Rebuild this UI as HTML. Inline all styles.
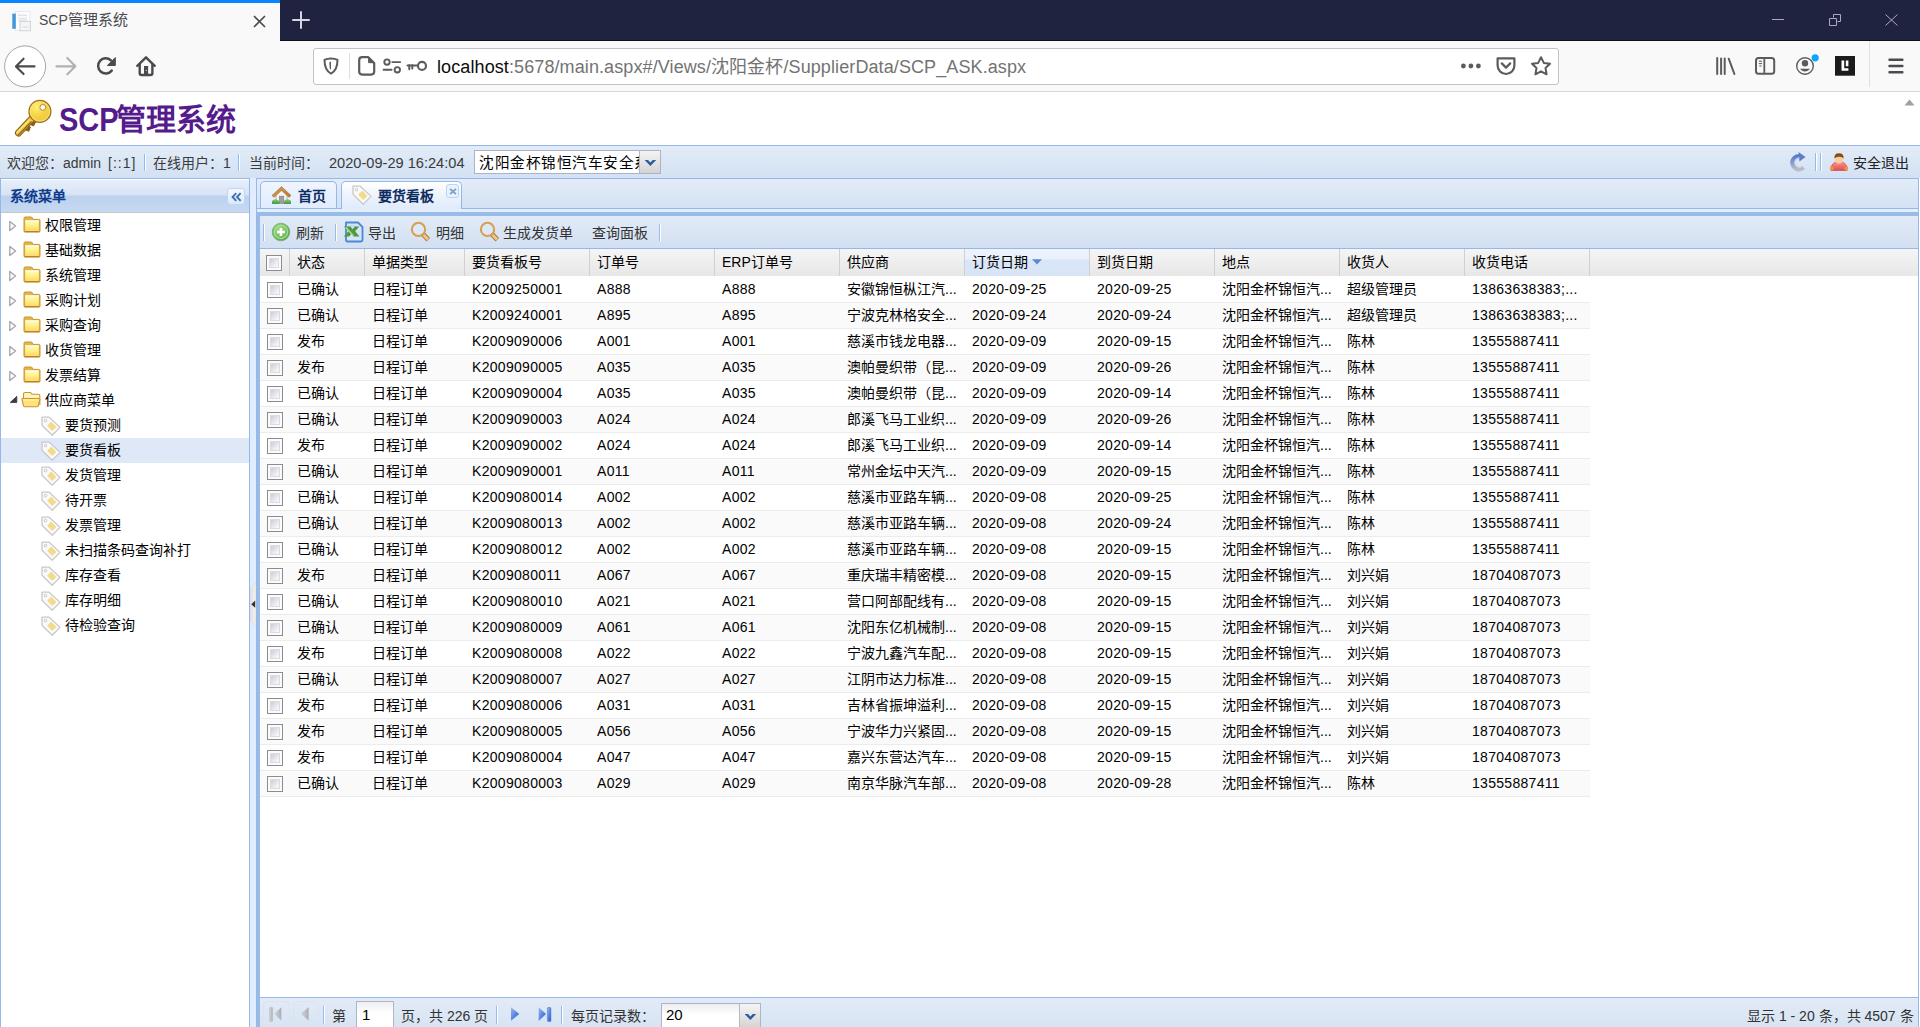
<!DOCTYPE html>
<html lang="zh-CN"><head><meta charset="utf-8">
<style>
*{margin:0;padding:0;box-sizing:border-box}
html,body{width:1920px;height:1027px;overflow:hidden;background:#fff;font-family:"Liberation Sans",sans-serif;}
.abs{position:absolute}
i{display:block;position:absolute;font-style:normal}
/* ---------- firefox chrome ---------- */
#tabbar{position:absolute;left:0;top:0;width:1920px;height:41px;background:#202340;}
#tabbar .edge{position:absolute;left:280px;top:40px;width:1640px;height:1px;background:#0c0c1d}
#acttab{position:absolute;left:0;top:0;width:280px;height:41px;background:#f9f9fa}
#acttab .line{position:absolute;left:0;top:0;width:280px;height:3px;background:#0a84ff}
#acttab .title{position:absolute;left:39px;top:9px;font-size:15px;color:#4a4a4f;white-space:nowrap;line-height:22px}
#navbar{position:absolute;left:0;top:41px;width:1920px;height:50px;background:#f9f9fa}
#navbar .bb{position:absolute;left:0;top:50px;width:1920px;height:1px;background:#d7d7db}
#urlbox{position:absolute;left:313px;top:48px;width:1246px;height:37px;background:#fff;border:1px solid #c2c2c4;border-radius:3px}
#urltext{position:absolute;left:437px;top:56px;letter-spacing:0.1px;font-size:18px;line-height:22px;color:#0c0c0d;white-space:nowrap}
#urltext span{color:#737373}
svg{position:absolute;overflow:visible}
/* ---------- page ---------- */
#logo{position:absolute;left:59px;top:100px;font-size:30px;font-weight:900;color:#551a8b;line-height:40px;white-space:nowrap}
#userbar{position:absolute;left:0;top:145px;width:1920px;height:33px;border-top:1px solid #95b8e7;background:linear-gradient(#e3ecf8,#d3e1f3)}
.ub{position:absolute;top:8px;font-size:14px;color:#3a3a3a;line-height:18px;white-space:nowrap}
.ub.lat{font-size:14px}
.usep{position:absolute;top:8px;width:2px;height:17px;border-left:1px solid #8fbaf5;border-right:1px solid #fff}
#combo{position:absolute;left:474px;top:150px;width:187px;height:24px;border:1px solid #aab3c8;background:#fff}
#combo .t{position:absolute;left:4px;top:2px;font-size:14.6px;letter-spacing:0.5px;color:#000;line-height:20px;white-space:nowrap;width:175px;overflow:hidden}
#combo .arr{position:absolute;right:0;top:0;width:21px;height:22px;background:linear-gradient(#f4f4f4,#e6e6e6 45%,#d3d3d3);border-left:1px solid #b4b9c8}
/* west */
#west{position:absolute;left:0;top:178px;width:250px;height:849px;border:1px solid #95b8e7;border-bottom:none;background:#fff}
#westhead{position:absolute;left:0;top:0;width:248px;height:34px;background:linear-gradient(#e6eefa 0,#d7e3f4 15px,#bcd1ee 16px,#c6daf3 33px);border-top:1px solid #fff;border-bottom:1px solid #c6c6c6}
#westhead .t{position:absolute;left:9px;top:7px;font-size:14px;font-weight:bold;color:#0e3b8c;line-height:18px}
#collapse{position:absolute;left:226px;top:8px;width:18px;height:17px;border:1px solid #c0d6f5;border-radius:3px;background:linear-gradient(#f4f8fe,#dbe8fb)}
#splitter{position:absolute;left:250px;top:178px;width:6px;height:849px;background:#e0ecff}
.tn{position:absolute;left:0;width:248px;height:25px}
.tn.sel{background:#dfe8f6}
.tt{position:absolute;top:3px;font-size:14px;color:#000;line-height:18px;white-space:nowrap}
/* center */
#center{position:absolute;left:256px;top:178px;width:1663px;height:849px;border:1px solid #95b8e7;border-bottom:none;background:#e0ecff}
#tabstrip{position:absolute;left:0;top:0;width:1661px;height:33px;background:linear-gradient(#e3ecf8 0,#d4e1f3 29px,#e4edfb 30px,#e4edfb 33px)}
#tabstrip .bl{position:absolute;left:0;top:29px;width:1661px;height:1px;background:#95b8e7}
.etab{position:absolute;top:2px;height:27px;border:1px solid #95b8e7;border-bottom:none;border-radius:5px 5px 0 0}
#tab1{left:3px;width:77px;background:linear-gradient(#eff5ff,#e0ecff)}
#tab2{left:84px;width:121px;height:28px;background:linear-gradient(#ffffff 0,#f4f8fe 30%,#dfeafb 100%)}
.etab .t{position:absolute;top:5px;font-size:14px;font-weight:bold;color:#0e2d5f;line-height:18px;white-space:nowrap}
#bluebar{position:absolute;left:0;top:33px;width:1661px;height:4px;background:#99bbe8}
#bluel{position:absolute;left:0;top:33px;width:3px;height:816px;background:#99bbe8}
#tbpanel{position:absolute;left:3px;top:37px;width:1658px;height:812px;background:#fff}
#toolbar{position:absolute;left:0;top:0;width:1658px;height:33px;background:linear-gradient(#e1eaf7,#d3e0f2);border-bottom:1px solid #95b8e7}
.tsep{position:absolute;top:8px;width:2px;height:17px;border-left:1px solid #99bbe8;border-right:1px solid #fff}
.tbt{position:absolute;top:8px;font-size:14px;color:#333;line-height:18px;white-space:nowrap}
/* grid */
#ghead{position:absolute;left:0;top:33px;width:1658px;height:27px;background:linear-gradient(#f5f5f5,#e7e7e7)}
.hsort{position:absolute;top:0;height:27px;background:linear-gradient(#edf3fc 0,#e9f1fc 10px,#d9e6f8 11px,#d8e5f7 27px)}
.hc{position:absolute;top:4px;font-size:14px;color:#000;line-height:18px;white-space:nowrap}
.hdiv{position:absolute;top:0;width:1px;height:27px;background:#d0d0d0}
.row{position:absolute;left:0;width:1330px;height:26px;background:#fff;border-bottom:1px solid #ececec}
.row.alt{background:#fafafa}
.c{position:absolute;top:3px;font-size:14px;color:#000;line-height:18px;white-space:nowrap}
.c.l{letter-spacing:0.3px}
.cb{width:16px;height:16px;border:1px solid #8c8c8c;background:#fbfbfb}
.cb::after{content:"";box-sizing:border-box;position:absolute;left:2px;top:2px;width:10px;height:10px;border:1px solid #d9dce2;background:linear-gradient(135deg,#c9ced6,#eef0f3 70%,#f7f8f9)}
#pager{position:absolute;left:0;top:781px;width:1658px;height:30px;border-top:1px solid #95b8e7;background:linear-gradient(#e2ebf7,#d8e4f3)}
.pt{position:absolute;top:9px;font-size:14px;color:#333;line-height:18px;white-space:nowrap}
.pbtn{position:absolute;top:3px;height:30px;border:1px solid #dde3ec;border-radius:4px}
.pinp{position:absolute;top:3px;height:30px;border:1px solid #b0b4c6;background:linear-gradient(#eceeef,#fff 40%)}
</style></head><body>
<!-- Firefox tab bar -->
<div id="tabbar"><div class="edge"></div>
  <div id="acttab"><div class="line"></div>
    <div class="title"><span style="font-size:14px">SCP</span>管理系统</div>
  </div>
</div>
<div id="navbar"><div class="bb"></div></div>
<div id="urlbox"></div>
<div id="urltext">localhost<span>:5678/main.aspx#/Views/沈阳金杯/SupplierData/SCP_ASK.aspx</span></div>
<svg style="left:0;top:0" width="1920" height="92" viewBox="0 0 1920 92">
 <g id="favicon">
  <rect x="15.5" y="11.5" width="14.5" height="19" fill="#fbfcfd" stroke="#e3e6ea" stroke-width="0.8"/>
  <rect x="12.3" y="13.6" width="3.5" height="15.2" fill="#4398da"/>
  <rect x="18" y="14.5" width="9" height="1.6" fill="#e2e6ec"/>
  <rect x="18.5" y="17.5" width="8.5" height="3.8" fill="#e6eaf0"/>
  <rect x="20" y="21.5" width="10.5" height="9.3" fill="#f4f5f7" stroke="#c9ccd1" stroke-width="0.8"/>
  <rect x="22.5" y="26" width="6" height="2" fill="#e4e7ec"/>
 </g>
 <path d="M254 16L265 27M265 16L254 27" stroke="#4a4a4f" stroke-width="1.7"/>
 <path d="M301 12V28M293 20H309" stroke="#d6d6de" stroke-width="2" stroke-linecap="round"/>
 <path d="M1772 19.5H1784" stroke="#a9a9b8" stroke-width="1"/>
 <path d="M1833.5 17.5V14.5H1840.5V21.5H1837.5M1829.5 18.5H1836.5V25.5H1829.5Z" fill="none" stroke="#a9a9b8" stroke-width="1"/>
 <path d="M1885.5 14.5L1897.5 25.5M1897.5 14.5L1885.5 25.5" stroke="#a9a9b8" stroke-width="1"/>
 <circle cx="25.1" cy="66.4" r="20.5" fill="#fff" stroke="#a5a5a7" stroke-width="1"/>
 <path d="M34.5 66.4H16.5M23.6 58.7L15.9 66.4L23.6 74.1" fill="none" stroke="#4a4a4f" stroke-width="2.1" stroke-linecap="round" stroke-linejoin="round"/>
 <path d="M56.5 66.4H74.5M67.3 57.9L75.4 66.2L67.3 74.3" fill="none" stroke="#b1b1b3" stroke-width="2.1" stroke-linecap="round" stroke-linejoin="round"/>
 <path d="M111.7 70.6A7.6 7.6 0 1 1 110.9 60.3" fill="none" stroke="#4a4a4f" stroke-width="2.5" stroke-linecap="round"/>
 <path d="M115.3 57.6V65.5H107.4Z" fill="#4a4a4f" stroke="#4a4a4f" stroke-width="1" stroke-linejoin="round"/>
 <path d="M137.3 65.8L146 57.3L154.7 65.8" fill="none" stroke="#4a4a4f" stroke-width="2.4" stroke-linecap="round" stroke-linejoin="round"/>
 <path d="M139.7 63.5V73A2 2 0 0 0 141.7 75H150.4A2 2 0 0 0 152.4 73V63.5" fill="none" stroke="#4a4a4f" stroke-width="2.4"/>
 <rect x="144" y="66" width="4.1" height="9" fill="#4a4a4f"/>
 <circle cx="146.3" cy="70.5" r="0.6" fill="#fff"/>
 <path d="M331 58.5C328 58.5 325.6 59.3 324.5 59.9C324.5 66.2 325.6 70.6 331 73.6C336.4 70.6 337.5 66.2 337.5 59.9C336.4 59.3 334 58.5 331 58.5Z" fill="none" stroke="#5b5b5f" stroke-width="2" stroke-linejoin="round"/>
 <path d="M329.3 62.2L331 61.6V69.6L329.8 69Z" fill="#5b5b5f"/>
 <rect x="349" y="53" width="1" height="26" fill="#dedee0"/>
 <path d="M362.2 57.2H368.3L374.2 63.1V71.6A3 3 0 0 1 371.2 74.6H362.2A3 3 0 0 1 359.2 71.6V60.2A3 3 0 0 1 362.2 57.2Z" fill="none" stroke="#5b5b5f" stroke-width="2.2" stroke-linejoin="round"/>
 <path d="M368.6 58V62.7H373.5" fill="#5b5b5f" stroke="#5b5b5f" stroke-width="1"/>
 <circle cx="387" cy="62.1" r="2.7" fill="none" stroke="#5b5b5f" stroke-width="1.9"/>
 <circle cx="397.3" cy="69.8" r="2.7" fill="none" stroke="#5b5b5f" stroke-width="1.9"/>
 <path d="M392.3 62.1H400.2M383.6 69.8H391.6" stroke="#5b5b5f" stroke-width="1.9" stroke-linecap="round"/>
 <circle cx="422" cy="65.9" r="4" fill="none" stroke="#5b5b5f" stroke-width="2.1"/>
 <path d="M407.5 65.6H418M409.3 65V69.2M412.3 65V68.5" stroke="#5b5b5f" stroke-width="2" stroke-linecap="round"/>
 <circle cx="1463.4" cy="66" r="2.4" fill="#5b5b5f"/><circle cx="1470.9" cy="66" r="2.4" fill="#5b5b5f"/><circle cx="1478.4" cy="66" r="2.4" fill="#5b5b5f"/>
 <path d="M1497.6 58.4H1514.4V65.6A8.4 8.4 0 0 1 1497.6 65.6Z" fill="none" stroke="#5b5b5f" stroke-width="2.2" stroke-linejoin="round"/>
 <path d="M1501.8 63.4L1506 67.6L1510.2 63.4" fill="none" stroke="#5b5b5f" stroke-width="2.2" stroke-linecap="round" stroke-linejoin="round"/>
 <path d="M1541 57.2L1543.8 62.9L1550 63.7L1545.5 68L1546.6 74.3L1541 71.3L1535.4 74.3L1536.5 68L1532 63.7L1538.2 62.9Z" fill="none" stroke="#5b5b5f" stroke-width="2" stroke-linejoin="round"/>
 <path d="M1717.2 58V74M1721.1 58.5V74M1724.7 58.5V74M1728.7 58.7L1734.4 74" stroke="#5b5b5f" stroke-width="2" stroke-linecap="round"/>
 <rect x="1756" y="58" width="18.2" height="15.8" rx="2.6" fill="none" stroke="#5b5b5f" stroke-width="2"/>
 <path d="M1764.3 58V74" stroke="#5b5b5f" stroke-width="1.8"/>
 <path d="M1758.8 61.2H1762M1758.8 63.6H1762M1759.3 66H1761.5" stroke="#5b5b5f" stroke-width="1"/>
 <circle cx="1805" cy="66" r="8.3" fill="none" stroke="#5b5b5f" stroke-width="1.4"/>
 <circle cx="1805" cy="63.2" r="3.2" fill="#5b5b5f"/>
 <path d="M1800 68.8H1810A6 6 0 0 1 1800 68.8Z" fill="#5b5b5f"/>
 <circle cx="1815.2" cy="57.8" r="3.6" fill="#0aa5ff"/>
 <rect x="1835" y="56" width="20" height="19.7" fill="#1b1b1b"/>
 <path d="M1841.5 60.5H1844.2V68.3H1848.4V70.8H1841.5ZM1845.8 60.5H1848.4V66.2H1845.8Z" fill="#fff"/>
 <rect x="1869" y="41" width="1" height="46" fill="#e0e0e2"/>
 <path d="M1889.5 59.7H1902.4M1889.5 66H1902.4M1889.5 72.2H1902.4" stroke="#4a4a4f" stroke-width="2.4" stroke-linecap="round"/>
</svg>
<!-- page header -->
<svg style="left:12px;top:96px" width="44" height="44" viewBox="0 0 44 44">
  <defs><radialGradient id="kg" cx="0.35" cy="0.3" r="0.8"><stop offset="0" stop-color="#fff07a"/><stop offset="0.55" stop-color="#f4d23c"/><stop offset="1" stop-color="#e9c85a"/></radialGradient>
  <linearGradient id="ks" x1="0" y1="0" x2="1" y2="0"><stop offset="0" stop-color="#fbe679"/><stop offset="1" stop-color="#d9a826"/></linearGradient></defs>
  <path d="M21 21.5L6.5 37" stroke="#8d5c1c" stroke-width="7" stroke-linecap="round"/>
  <path d="M23.5 25L20.5 28.3L22.2 29.2M18 30.5L15.5 33.5L17.5 34.3" stroke="#8d5c1c" stroke-width="3"/>
  <path d="M21 21.5L6.5 37" stroke="#f1cf45" stroke-width="5" stroke-linecap="round"/>
  <path d="M19.5 25.5L5.8 39.5" stroke="#8d5c1c" stroke-width="1.2"/>
  <path d="M17 24.5L4.5 37" stroke="#fff3a8" stroke-width="1"/>
  <circle cx="27.9" cy="15.4" r="11" fill="url(#kg)" stroke="#a6741f" stroke-width="1.2"/>
  <circle cx="27.9" cy="15.4" r="9.6" fill="none" stroke="#fbeb9a" stroke-width="0.8" opacity="0.7"/>
  <circle cx="30.8" cy="11.4" r="2.9" fill="#fff" stroke="#b08a2a" stroke-width="1"/>
</svg>
<div id="logo"><span style="display:inline-block;font-size:33px;transform:scaleX(0.88);transform-origin:0 0;width:57px;vertical-align:-1px">SCP</span>管理系统</div>
<svg style="left:1904px;top:99px" width="11" height="7" viewBox="0 0 11 7"><path d="M5.5 .5L10.5 6.5H.5z" fill="#a0a0a0"/></svg>

<div id="userbar">
  <div class="ub" style="left:7px">欢迎您：</div>
  <div class="ub lat" style="left:63px">admin</div>
  <div class="ub lat" style="left:108px;letter-spacing:1px">[::1]</div>
  <div class="usep" style="left:144px"></div>
  <div class="ub" style="left:153px">在线用户：</div>
  <div class="ub lat" style="left:223px">1</div>
  <div class="usep" style="left:238px"></div>
  <div class="ub" style="left:249px">当前时间：</div>
  <div class="ub lat" style="left:329px;font-size:14.6px">2020-09-29 16:24:04</div>
  <div class="ub" style="left:1853px;color:#222">安全退出</div>
  <div class="usep" style="left:1815px;top:7px;height:18px"></div>
  <div class="usep" style="left:1820px;top:7px;height:18px"></div>
</div>
<svg style="left:1790px;top:151px" width="17" height="20" viewBox="0 0 17 20">
  <defs><linearGradient id="rf" x1="0" y1="0" x2="0" y2="1"><stop offset="0" stop-color="#5a7cc8"/><stop offset="0.6" stop-color="#8fa3d0"/><stop offset="1" stop-color="#b9bcc4"/></linearGradient></defs>
  <path d="M13.5 16.5A6.6 6.6 0 1 1 10 5.2" fill="none" stroke="url(#rf)" stroke-width="4.2"/>
  <path d="M8.5 1L15.5 6L9.5 10.5Z" fill="#5d7ec6"/>
  <path d="M12.8 15.6A5 5 0 1 1 9.5 6.6" fill="none" stroke="#c8d2ea" stroke-width="1.3" opacity="0.8"/>
</svg>
<svg style="left:1829px;top:152px" width="20" height="20" viewBox="0 0 20 20">
  <defs><linearGradient id="ubd" x1="0" y1="0" x2="0" y2="1"><stop offset="0" stop-color="#ff9a9a"/><stop offset="1" stop-color="#e04a4a"/></linearGradient></defs>
  <path d="M2 18.5Q1 14 4.5 11.2Q7 9.5 10 9.5Q13 9.5 15.5 11.2Q19 14 18 18.5Z" fill="url(#ubd)" stroke="#c94040" stroke-width="0.6"/>
  <circle cx="2.8" cy="16.5" r="1.9" fill="#e5983e"/><circle cx="17.2" cy="16.5" r="1.9" fill="#e5983e"/>
  <ellipse cx="10" cy="7" rx="4.3" ry="4.6" fill="#f6cf9e"/>
  <path d="M5.4 6.5Q5 1.2 10 1.2Q15 1.2 14.6 6.5Q13 4.3 9.5 4.8Q7 5 5.4 6.5Z" fill="#8a4a16"/>
</svg>
<div id="combo"><div class="t">沈阳金杯锦恒汽车安全系统</div><div class="arr"><svg style="left:4px;top:8px" width="13" height="8" viewBox="0 0 13 8"><path d="M0.6 1H4L6.4 3.6L8.8 1H12.2L6.4 7Z" fill="#2f5a9f"/></svg></div></div>

<!-- west -->
<div id="west">
  <div id="westhead"><div class="t">系统菜单</div><div id="collapse"><svg style="left:3px;top:3px" width="11" height="10" viewBox="0 0 11 10"><path d="M5.2 1.2L1.6 5L5.2 8.8M9.6 1.2L6 5L9.6 8.8" fill="none" stroke="#3f6fae" stroke-width="1.9" stroke-linejoin="miter"/></svg></div></div>
<div class="tn" style="top:34px"><svg style="left:7px;top:7px" width="9" height="12" viewBox="0 0 9 12"><path d="M1.8 1.5L7.6 6L1.8 10.5Z" fill="#fff" stroke="#a3a3a3" stroke-width="1.3" stroke-linejoin="round"/></svg><svg style="left:21px;top:3px" width="19" height="17" viewBox="0 0 19 17"><defs><linearGradient id="fg" x1="0" y1="0" x2="0" y2="1"><stop offset="0" stop-color="#fffdc0"/><stop offset="0.5" stop-color="#fff08a"/><stop offset="1" stop-color="#ffd86c"/></linearGradient></defs><path d="M2 4.2V2.2Q2 1 3.2 1H9Q9.8 1 10.3 1.8L11 3.4H16.8Q18 3.4 18 4.6V15Q18 16 17 16H3Q2 16 2 15Z" fill="#e3b448" stroke="#c9952e" stroke-width="1"/><rect x="3.2" y="4.6" width="13.6" height="10.4" fill="url(#fg)"/><path d="M3.2 4.8H16.8" stroke="#fff" stroke-width="1"/><path d="M2.5 15.6H17.5" stroke="#b98522" stroke-width="1.2"/></svg><span class="tt" style="left:44px">权限管理</span></div>
<div class="tn" style="top:59px"><svg style="left:7px;top:7px" width="9" height="12" viewBox="0 0 9 12"><path d="M1.8 1.5L7.6 6L1.8 10.5Z" fill="#fff" stroke="#a3a3a3" stroke-width="1.3" stroke-linejoin="round"/></svg><svg style="left:21px;top:3px" width="19" height="17" viewBox="0 0 19 17"><defs><linearGradient id="fg" x1="0" y1="0" x2="0" y2="1"><stop offset="0" stop-color="#fffdc0"/><stop offset="0.5" stop-color="#fff08a"/><stop offset="1" stop-color="#ffd86c"/></linearGradient></defs><path d="M2 4.2V2.2Q2 1 3.2 1H9Q9.8 1 10.3 1.8L11 3.4H16.8Q18 3.4 18 4.6V15Q18 16 17 16H3Q2 16 2 15Z" fill="#e3b448" stroke="#c9952e" stroke-width="1"/><rect x="3.2" y="4.6" width="13.6" height="10.4" fill="url(#fg)"/><path d="M3.2 4.8H16.8" stroke="#fff" stroke-width="1"/><path d="M2.5 15.6H17.5" stroke="#b98522" stroke-width="1.2"/></svg><span class="tt" style="left:44px">基础数据</span></div>
<div class="tn" style="top:84px"><svg style="left:7px;top:7px" width="9" height="12" viewBox="0 0 9 12"><path d="M1.8 1.5L7.6 6L1.8 10.5Z" fill="#fff" stroke="#a3a3a3" stroke-width="1.3" stroke-linejoin="round"/></svg><svg style="left:21px;top:3px" width="19" height="17" viewBox="0 0 19 17"><defs><linearGradient id="fg" x1="0" y1="0" x2="0" y2="1"><stop offset="0" stop-color="#fffdc0"/><stop offset="0.5" stop-color="#fff08a"/><stop offset="1" stop-color="#ffd86c"/></linearGradient></defs><path d="M2 4.2V2.2Q2 1 3.2 1H9Q9.8 1 10.3 1.8L11 3.4H16.8Q18 3.4 18 4.6V15Q18 16 17 16H3Q2 16 2 15Z" fill="#e3b448" stroke="#c9952e" stroke-width="1"/><rect x="3.2" y="4.6" width="13.6" height="10.4" fill="url(#fg)"/><path d="M3.2 4.8H16.8" stroke="#fff" stroke-width="1"/><path d="M2.5 15.6H17.5" stroke="#b98522" stroke-width="1.2"/></svg><span class="tt" style="left:44px">系统管理</span></div>
<div class="tn" style="top:109px"><svg style="left:7px;top:7px" width="9" height="12" viewBox="0 0 9 12"><path d="M1.8 1.5L7.6 6L1.8 10.5Z" fill="#fff" stroke="#a3a3a3" stroke-width="1.3" stroke-linejoin="round"/></svg><svg style="left:21px;top:3px" width="19" height="17" viewBox="0 0 19 17"><defs><linearGradient id="fg" x1="0" y1="0" x2="0" y2="1"><stop offset="0" stop-color="#fffdc0"/><stop offset="0.5" stop-color="#fff08a"/><stop offset="1" stop-color="#ffd86c"/></linearGradient></defs><path d="M2 4.2V2.2Q2 1 3.2 1H9Q9.8 1 10.3 1.8L11 3.4H16.8Q18 3.4 18 4.6V15Q18 16 17 16H3Q2 16 2 15Z" fill="#e3b448" stroke="#c9952e" stroke-width="1"/><rect x="3.2" y="4.6" width="13.6" height="10.4" fill="url(#fg)"/><path d="M3.2 4.8H16.8" stroke="#fff" stroke-width="1"/><path d="M2.5 15.6H17.5" stroke="#b98522" stroke-width="1.2"/></svg><span class="tt" style="left:44px">采购计划</span></div>
<div class="tn" style="top:134px"><svg style="left:7px;top:7px" width="9" height="12" viewBox="0 0 9 12"><path d="M1.8 1.5L7.6 6L1.8 10.5Z" fill="#fff" stroke="#a3a3a3" stroke-width="1.3" stroke-linejoin="round"/></svg><svg style="left:21px;top:3px" width="19" height="17" viewBox="0 0 19 17"><defs><linearGradient id="fg" x1="0" y1="0" x2="0" y2="1"><stop offset="0" stop-color="#fffdc0"/><stop offset="0.5" stop-color="#fff08a"/><stop offset="1" stop-color="#ffd86c"/></linearGradient></defs><path d="M2 4.2V2.2Q2 1 3.2 1H9Q9.8 1 10.3 1.8L11 3.4H16.8Q18 3.4 18 4.6V15Q18 16 17 16H3Q2 16 2 15Z" fill="#e3b448" stroke="#c9952e" stroke-width="1"/><rect x="3.2" y="4.6" width="13.6" height="10.4" fill="url(#fg)"/><path d="M3.2 4.8H16.8" stroke="#fff" stroke-width="1"/><path d="M2.5 15.6H17.5" stroke="#b98522" stroke-width="1.2"/></svg><span class="tt" style="left:44px">采购查询</span></div>
<div class="tn" style="top:159px"><svg style="left:7px;top:7px" width="9" height="12" viewBox="0 0 9 12"><path d="M1.8 1.5L7.6 6L1.8 10.5Z" fill="#fff" stroke="#a3a3a3" stroke-width="1.3" stroke-linejoin="round"/></svg><svg style="left:21px;top:3px" width="19" height="17" viewBox="0 0 19 17"><defs><linearGradient id="fg" x1="0" y1="0" x2="0" y2="1"><stop offset="0" stop-color="#fffdc0"/><stop offset="0.5" stop-color="#fff08a"/><stop offset="1" stop-color="#ffd86c"/></linearGradient></defs><path d="M2 4.2V2.2Q2 1 3.2 1H9Q9.8 1 10.3 1.8L11 3.4H16.8Q18 3.4 18 4.6V15Q18 16 17 16H3Q2 16 2 15Z" fill="#e3b448" stroke="#c9952e" stroke-width="1"/><rect x="3.2" y="4.6" width="13.6" height="10.4" fill="url(#fg)"/><path d="M3.2 4.8H16.8" stroke="#fff" stroke-width="1"/><path d="M2.5 15.6H17.5" stroke="#b98522" stroke-width="1.2"/></svg><span class="tt" style="left:44px">收货管理</span></div>
<div class="tn" style="top:184px"><svg style="left:7px;top:7px" width="9" height="12" viewBox="0 0 9 12"><path d="M1.8 1.5L7.6 6L1.8 10.5Z" fill="#fff" stroke="#a3a3a3" stroke-width="1.3" stroke-linejoin="round"/></svg><svg style="left:21px;top:3px" width="19" height="17" viewBox="0 0 19 17"><defs><linearGradient id="fg" x1="0" y1="0" x2="0" y2="1"><stop offset="0" stop-color="#fffdc0"/><stop offset="0.5" stop-color="#fff08a"/><stop offset="1" stop-color="#ffd86c"/></linearGradient></defs><path d="M2 4.2V2.2Q2 1 3.2 1H9Q9.8 1 10.3 1.8L11 3.4H16.8Q18 3.4 18 4.6V15Q18 16 17 16H3Q2 16 2 15Z" fill="#e3b448" stroke="#c9952e" stroke-width="1"/><rect x="3.2" y="4.6" width="13.6" height="10.4" fill="url(#fg)"/><path d="M3.2 4.8H16.8" stroke="#fff" stroke-width="1"/><path d="M2.5 15.6H17.5" stroke="#b98522" stroke-width="1.2"/></svg><span class="tt" style="left:44px">发票结算</span></div>
<div class="tn" style="top:209px"><svg style="left:7px;top:7px" width="10" height="9" viewBox="0 0 10 9"><path d="M8.8 1.3V7.5H2.2Z" fill="#3a3a3a" stroke="#3a3a3a" stroke-width="0.8" stroke-linejoin="round"/></svg><svg style="left:20px;top:3px" width="21" height="17" viewBox="0 0 21 17"><path d="M2.5 13V3Q2.5 1.5 4 1.5H9.5L11 3.3H17.5Q18.8 3.3 18.8 4.6V14" fill="#fdf4c0" stroke="#c9952e" stroke-width="1.1"/><path d="M1.3 7.5H17.8Q19.2 7.5 18.8 8.8L17.3 14.8Q17 15.8 16 15.8H3.8Q2.8 15.8 2.6 14.8L1 8.6Q0.8 7.5 1.3 7.5Z" fill="#ffe37a" stroke="#c9952e" stroke-width="1.1"/><path d="M2.5 9H17.3" stroke="#fff6b0" stroke-width="1"/></svg><span class="tt" style="left:44px">供应商菜单</span></div>
<div class="tn" style="top:234px"><svg style="left:40px;top:3px" width="20" height="20" viewBox="0 0 20 20"><path d="M1 1.2H8.2L19 11.4L11.2 19.2L1 9.2Z" fill="#fafafa" stroke="#c9c9c9" stroke-width="1.3" stroke-linejoin="round"/><circle cx="4.5" cy="4.6" r="1.3" fill="#fff" stroke="#bdbdbd" stroke-width="0.9"/><path d="M10.2 5.6L15.4 10.9L11.3 15L6.1 9.7Z" fill="#f2db8a"/></svg><span class="tt" style="left:64px">要货预测</span></div>
<div class="tn sel" style="top:259px"><svg style="left:40px;top:3px" width="20" height="20" viewBox="0 0 20 20"><path d="M1 1.2H8.2L19 11.4L11.2 19.2L1 9.2Z" fill="#fafafa" stroke="#c9c9c9" stroke-width="1.3" stroke-linejoin="round"/><circle cx="4.5" cy="4.6" r="1.3" fill="#fff" stroke="#bdbdbd" stroke-width="0.9"/><path d="M10.2 5.6L15.4 10.9L11.3 15L6.1 9.7Z" fill="#f2db8a"/></svg><span class="tt" style="left:64px">要货看板</span></div>
<div class="tn" style="top:284px"><svg style="left:40px;top:3px" width="20" height="20" viewBox="0 0 20 20"><path d="M1 1.2H8.2L19 11.4L11.2 19.2L1 9.2Z" fill="#fafafa" stroke="#c9c9c9" stroke-width="1.3" stroke-linejoin="round"/><circle cx="4.5" cy="4.6" r="1.3" fill="#fff" stroke="#bdbdbd" stroke-width="0.9"/><path d="M10.2 5.6L15.4 10.9L11.3 15L6.1 9.7Z" fill="#f2db8a"/></svg><span class="tt" style="left:64px">发货管理</span></div>
<div class="tn" style="top:309px"><svg style="left:40px;top:3px" width="20" height="20" viewBox="0 0 20 20"><path d="M1 1.2H8.2L19 11.4L11.2 19.2L1 9.2Z" fill="#fafafa" stroke="#c9c9c9" stroke-width="1.3" stroke-linejoin="round"/><circle cx="4.5" cy="4.6" r="1.3" fill="#fff" stroke="#bdbdbd" stroke-width="0.9"/><path d="M10.2 5.6L15.4 10.9L11.3 15L6.1 9.7Z" fill="#f2db8a"/></svg><span class="tt" style="left:64px">待开票</span></div>
<div class="tn" style="top:334px"><svg style="left:40px;top:3px" width="20" height="20" viewBox="0 0 20 20"><path d="M1 1.2H8.2L19 11.4L11.2 19.2L1 9.2Z" fill="#fafafa" stroke="#c9c9c9" stroke-width="1.3" stroke-linejoin="round"/><circle cx="4.5" cy="4.6" r="1.3" fill="#fff" stroke="#bdbdbd" stroke-width="0.9"/><path d="M10.2 5.6L15.4 10.9L11.3 15L6.1 9.7Z" fill="#f2db8a"/></svg><span class="tt" style="left:64px">发票管理</span></div>
<div class="tn" style="top:359px"><svg style="left:40px;top:3px" width="20" height="20" viewBox="0 0 20 20"><path d="M1 1.2H8.2L19 11.4L11.2 19.2L1 9.2Z" fill="#fafafa" stroke="#c9c9c9" stroke-width="1.3" stroke-linejoin="round"/><circle cx="4.5" cy="4.6" r="1.3" fill="#fff" stroke="#bdbdbd" stroke-width="0.9"/><path d="M10.2 5.6L15.4 10.9L11.3 15L6.1 9.7Z" fill="#f2db8a"/></svg><span class="tt" style="left:64px">未扫描条码查询补打</span></div>
<div class="tn" style="top:384px"><svg style="left:40px;top:3px" width="20" height="20" viewBox="0 0 20 20"><path d="M1 1.2H8.2L19 11.4L11.2 19.2L1 9.2Z" fill="#fafafa" stroke="#c9c9c9" stroke-width="1.3" stroke-linejoin="round"/><circle cx="4.5" cy="4.6" r="1.3" fill="#fff" stroke="#bdbdbd" stroke-width="0.9"/><path d="M10.2 5.6L15.4 10.9L11.3 15L6.1 9.7Z" fill="#f2db8a"/></svg><span class="tt" style="left:64px">库存查看</span></div>
<div class="tn" style="top:409px"><svg style="left:40px;top:3px" width="20" height="20" viewBox="0 0 20 20"><path d="M1 1.2H8.2L19 11.4L11.2 19.2L1 9.2Z" fill="#fafafa" stroke="#c9c9c9" stroke-width="1.3" stroke-linejoin="round"/><circle cx="4.5" cy="4.6" r="1.3" fill="#fff" stroke="#bdbdbd" stroke-width="0.9"/><path d="M10.2 5.6L15.4 10.9L11.3 15L6.1 9.7Z" fill="#f2db8a"/></svg><span class="tt" style="left:64px">库存明细</span></div>
<div class="tn" style="top:434px"><svg style="left:40px;top:3px" width="20" height="20" viewBox="0 0 20 20"><path d="M1 1.2H8.2L19 11.4L11.2 19.2L1 9.2Z" fill="#fafafa" stroke="#c9c9c9" stroke-width="1.3" stroke-linejoin="round"/><circle cx="4.5" cy="4.6" r="1.3" fill="#fff" stroke="#bdbdbd" stroke-width="0.9"/><path d="M10.2 5.6L15.4 10.9L11.3 15L6.1 9.7Z" fill="#f2db8a"/></svg><span class="tt" style="left:64px">待检验查询</span></div>
</div>
<div id="splitter"></div>
<svg style="left:250px;top:582px" width="6" height="45" viewBox="0 0 6 45">
  <defs><linearGradient id="sph" x1="0" y1="0" x2="1" y2="0"><stop offset="0" stop-color="#e2e2e2"/><stop offset="1" stop-color="#f2f2f2"/></linearGradient></defs>
  <path d="M0.5 6L6 0.5V44.5L0.5 39Z" fill="url(#sph)" stroke="#d8d8d8" stroke-width="0.6"/>
  <path d="M1.2 22.2L5.2 18.6V25.8Z" fill="#333"/>
</svg>

<!-- center -->
<div id="center">
  <div id="tabstrip"><div class="bl"></div>
    <div class="etab" id="tab1"><svg style="left:10px;top:3px" width="22" height="20" viewBox="0 0 22 20">
  <defs><linearGradient id="roof" x1="0" y1="0" x2="1" y2="1"><stop offset="0" stop-color="#d9a45c"/><stop offset="1" stop-color="#b7742e"/></linearGradient>
  <linearGradient id="grass" x1="0" y1="0" x2="0" y2="1"><stop offset="0" stop-color="#8acb6e"/><stop offset="1" stop-color="#3f9a3a"/></linearGradient></defs>
  <path d="M5 8.5V18H16V8.5L10.5 4Z" fill="#f3f3f3" stroke="#9a9a9a" stroke-width="0.7"/>
  <rect x="8.4" y="11.2" width="4.4" height="7" fill="#9e9e9e" stroke="#7c7c7c" stroke-width="0.6"/>
  <path d="M1 10.5L10.5 1.6L20 10.5L18 12.2L10.5 5.4L3 12.2Z" fill="url(#roof)" stroke="#a8692a" stroke-width="0.6" stroke-linejoin="round"/>
  <path d="M1 19V16Q2.5 14 5 14.3Q7.5 14.6 8.4 17V19Z" fill="url(#grass)"/>
  <path d="M20 19V16Q18.5 14 16 14.3Q13.5 14.6 12.8 17V19Z" fill="url(#grass)"/>
</svg><span class="t" style="left:37px">首页</span></div>
    <div class="etab" id="tab2"><svg style="left:10px;top:3px" width="20" height="20" viewBox="0 0 20 20">
  <path d="M1 1.2H8.2L19 11.4L11.2 19.2L1 9.2Z" fill="#fafafa" stroke="#c9c9c9" stroke-width="1.3" stroke-linejoin="round"/>
  <circle cx="4.5" cy="4.6" r="1.3" fill="#fff" stroke="#bdbdbd" stroke-width="0.9"/>
  <path d="M10.2 5.6L15.4 10.9L11.3 15L6.1 9.7Z" fill="#f2db8a"/></svg><span class="t" style="left:36px">要货看板</span>
  <div style="position:absolute;left:104px;top:2px;width:13px;height:14px;border:1px solid #bcd3f2;border-radius:3px;background:#eaf2fd"><svg style="left:2px;top:3px" width="8" height="7" viewBox="0 0 8 7"><path d="M1 .8L7 6.2M7 .8L1 6.2" stroke="#7d9ccc" stroke-width="1.8"/></svg></div></div>
  </div>
  <div id="bluebar"></div><div id="bluel"></div>
  <div id="tbpanel">
    <div id="toolbar">
      <i class="tsep" style="left:3px"></i>
      <svg style="left:11px;top:6px" width="20" height="20" viewBox="0 0 20 20">
        <defs><radialGradient id="gp" cx="0.4" cy="0.35" r="0.75"><stop offset="0" stop-color="#9fdc8a"/><stop offset="0.6" stop-color="#6fbe5c"/><stop offset="1" stop-color="#4f9a48"/></radialGradient></defs>
        <circle cx="10" cy="10" r="8.8" fill="url(#gp)" stroke="#79ae6e" stroke-width="0.8"/>
        <circle cx="10" cy="10" r="6.6" fill="none" stroke="#b9e4a8" stroke-width="1.1" opacity="0.85"/>
        <path d="M10 6V14M6 10H14" stroke="#fff" stroke-width="2.6"/>
      </svg>
      <svg style="left:83px;top:5px" width="21" height="22" viewBox="0 0 21 22">
        <path d="M3 1.5H15L19.5 6V19Q19.5 20.5 18 20.5H4.5Q3 20.5 3 19Z" fill="#d3e5fa" stroke="#4d88d2" stroke-width="1.8" stroke-linejoin="round"/>
        <path d="M5 4H13V6H5Z" fill="#c2dbf7"/>
        <path d="M0.8 5.5H7.5L9.5 8.3L11.8 5.5H16.2L12.2 10.3L16.5 15.5H10.3L8.3 12.8L6.2 15.5H0.8L5.5 10.3Z" fill="#4f9a3c"/>
        <path d="M2.8 6.3L10.5 15" stroke="#b8e39e" stroke-width="1.4" opacity="0.9"/>
      </svg>
      <svg style="left:150px;top:5px" width="22" height="22" viewBox="0 0 22 22">
        <circle cx="8.5" cy="8.4" r="6.6" fill="#dde9f6" stroke="#d6a050" stroke-width="2.1"/>
        <path d="M13.3 13.6L18.3 18.8" stroke="#b77a35" stroke-width="5" stroke-linecap="butt"/>
        <path d="M13.5 13.8L18 18.5" stroke="#e8c888" stroke-width="3"/>
      </svg>
      <svg style="left:219px;top:5px" width="22" height="22" viewBox="0 0 22 22">
        <circle cx="8.5" cy="8.4" r="6.6" fill="#dde9f6" stroke="#d6a050" stroke-width="2.1"/>
        <path d="M13.3 13.6L18.3 18.8" stroke="#b77a35" stroke-width="5" stroke-linecap="butt"/>
        <path d="M13.5 13.8L18 18.5" stroke="#e8c888" stroke-width="3"/>
      </svg>
      <span class="tbt" style="left:36px">刷新</span>
      <i class="tsep" style="left:75px"></i>
      <span class="tbt" style="left:108px">导出</span>
      <span class="tbt" style="left:176px">明细</span>
      <span class="tbt" style="left:243px">生成发货单</span>
      <span class="tbt" style="left:332px">查询面板</span>
      <i class="tsep" style="left:399px"></i>
    </div>
    <div id="ghead">
<span class="hc" style="left:37px">状态</span>
<span class="hc" style="left:112px">单据类型</span>
<span class="hc" style="left:212px">要货看板号</span>
<span class="hc" style="left:337px">订单号</span>
<span class="hc" style="left:462px">ERP订单号</span>
<span class="hc" style="left:587px">供应商</span>
<div class="hsort" style="left:705px;width:124px"></div>
<svg style="left:772px;top:10px" width="10" height="6" viewBox="0 0 10 6"><path d="M0 0.2H10L5 5.5Z" fill="#5b8ad0"/></svg>
<span class="hc" style="left:712px">订货日期</span>
<span class="hc" style="left:837px">到货日期</span>
<span class="hc" style="left:962px">地点</span>
<span class="hc" style="left:1087px">收货人</span>
<span class="hc" style="left:1212px">收货电话</span>
<i class="hdiv" style="left:29px"></i>
<i class="hdiv" style="left:104px"></i>
<i class="hdiv" style="left:204px"></i>
<i class="hdiv" style="left:329px"></i>
<i class="hdiv" style="left:454px"></i>
<i class="hdiv" style="left:579px"></i>
<i class="hdiv" style="left:704px"></i>
<i class="hdiv" style="left:829px"></i>
<i class="hdiv" style="left:954px"></i>
<i class="hdiv" style="left:1079px"></i>
<i class="hdiv" style="left:1204px"></i>
<i class="hdiv" style="left:1329px"></i>
<i class="cb" style="left:6px;top:6px"></i>
    </div>
    <div id="gbody" style="position:absolute;left:0;top:61px;width:1658px;height:720px">
<div class="row" style="top:0px"><i class="cb" style="left:7px;top:5px"></i><span class="c" style="left:37px">已确认</span><span class="c" style="left:112px">日程订单</span><span class="c l" style="left:212px">K2009250001</span><span class="c l" style="left:337px">A888</span><span class="c l" style="left:462px">A888</span><span class="c" style="left:587px">安徽锦恒枞江汽...</span><span class="c l" style="left:712px">2020-09-25</span><span class="c l" style="left:837px">2020-09-25</span><span class="c" style="left:962px">沈阳金杯锦恒汽...</span><span class="c" style="left:1087px">超级管理员</span><span class="c l" style="left:1212px">13863638383;...</span></div>
<div class="row alt" style="top:26px"><i class="cb" style="left:7px;top:5px"></i><span class="c" style="left:37px">已确认</span><span class="c" style="left:112px">日程订单</span><span class="c l" style="left:212px">K2009240001</span><span class="c l" style="left:337px">A895</span><span class="c l" style="left:462px">A895</span><span class="c" style="left:587px">宁波克林格安全...</span><span class="c l" style="left:712px">2020-09-24</span><span class="c l" style="left:837px">2020-09-24</span><span class="c" style="left:962px">沈阳金杯锦恒汽...</span><span class="c" style="left:1087px">超级管理员</span><span class="c l" style="left:1212px">13863638383;...</span></div>
<div class="row" style="top:52px"><i class="cb" style="left:7px;top:5px"></i><span class="c" style="left:37px">发布</span><span class="c" style="left:112px">日程订单</span><span class="c l" style="left:212px">K2009090006</span><span class="c l" style="left:337px">A001</span><span class="c l" style="left:462px">A001</span><span class="c" style="left:587px">慈溪市钱龙电器...</span><span class="c l" style="left:712px">2020-09-09</span><span class="c l" style="left:837px">2020-09-15</span><span class="c" style="left:962px">沈阳金杯锦恒汽...</span><span class="c" style="left:1087px">陈林</span><span class="c l" style="left:1212px">13555887411</span></div>
<div class="row alt" style="top:78px"><i class="cb" style="left:7px;top:5px"></i><span class="c" style="left:37px">发布</span><span class="c" style="left:112px">日程订单</span><span class="c l" style="left:212px">K2009090005</span><span class="c l" style="left:337px">A035</span><span class="c l" style="left:462px">A035</span><span class="c" style="left:587px">澳帕曼织带（昆...</span><span class="c l" style="left:712px">2020-09-09</span><span class="c l" style="left:837px">2020-09-26</span><span class="c" style="left:962px">沈阳金杯锦恒汽...</span><span class="c" style="left:1087px">陈林</span><span class="c l" style="left:1212px">13555887411</span></div>
<div class="row" style="top:104px"><i class="cb" style="left:7px;top:5px"></i><span class="c" style="left:37px">已确认</span><span class="c" style="left:112px">日程订单</span><span class="c l" style="left:212px">K2009090004</span><span class="c l" style="left:337px">A035</span><span class="c l" style="left:462px">A035</span><span class="c" style="left:587px">澳帕曼织带（昆...</span><span class="c l" style="left:712px">2020-09-09</span><span class="c l" style="left:837px">2020-09-14</span><span class="c" style="left:962px">沈阳金杯锦恒汽...</span><span class="c" style="left:1087px">陈林</span><span class="c l" style="left:1212px">13555887411</span></div>
<div class="row alt" style="top:130px"><i class="cb" style="left:7px;top:5px"></i><span class="c" style="left:37px">已确认</span><span class="c" style="left:112px">日程订单</span><span class="c l" style="left:212px">K2009090003</span><span class="c l" style="left:337px">A024</span><span class="c l" style="left:462px">A024</span><span class="c" style="left:587px">郎溪飞马工业织...</span><span class="c l" style="left:712px">2020-09-09</span><span class="c l" style="left:837px">2020-09-26</span><span class="c" style="left:962px">沈阳金杯锦恒汽...</span><span class="c" style="left:1087px">陈林</span><span class="c l" style="left:1212px">13555887411</span></div>
<div class="row" style="top:156px"><i class="cb" style="left:7px;top:5px"></i><span class="c" style="left:37px">发布</span><span class="c" style="left:112px">日程订单</span><span class="c l" style="left:212px">K2009090002</span><span class="c l" style="left:337px">A024</span><span class="c l" style="left:462px">A024</span><span class="c" style="left:587px">郎溪飞马工业织...</span><span class="c l" style="left:712px">2020-09-09</span><span class="c l" style="left:837px">2020-09-14</span><span class="c" style="left:962px">沈阳金杯锦恒汽...</span><span class="c" style="left:1087px">陈林</span><span class="c l" style="left:1212px">13555887411</span></div>
<div class="row alt" style="top:182px"><i class="cb" style="left:7px;top:5px"></i><span class="c" style="left:37px">已确认</span><span class="c" style="left:112px">日程订单</span><span class="c l" style="left:212px">K2009090001</span><span class="c l" style="left:337px">A011</span><span class="c l" style="left:462px">A011</span><span class="c" style="left:587px">常州金坛中天汽...</span><span class="c l" style="left:712px">2020-09-09</span><span class="c l" style="left:837px">2020-09-15</span><span class="c" style="left:962px">沈阳金杯锦恒汽...</span><span class="c" style="left:1087px">陈林</span><span class="c l" style="left:1212px">13555887411</span></div>
<div class="row" style="top:208px"><i class="cb" style="left:7px;top:5px"></i><span class="c" style="left:37px">已确认</span><span class="c" style="left:112px">日程订单</span><span class="c l" style="left:212px">K2009080014</span><span class="c l" style="left:337px">A002</span><span class="c l" style="left:462px">A002</span><span class="c" style="left:587px">慈溪市亚路车辆...</span><span class="c l" style="left:712px">2020-09-08</span><span class="c l" style="left:837px">2020-09-25</span><span class="c" style="left:962px">沈阳金杯锦恒汽...</span><span class="c" style="left:1087px">陈林</span><span class="c l" style="left:1212px">13555887411</span></div>
<div class="row alt" style="top:234px"><i class="cb" style="left:7px;top:5px"></i><span class="c" style="left:37px">已确认</span><span class="c" style="left:112px">日程订单</span><span class="c l" style="left:212px">K2009080013</span><span class="c l" style="left:337px">A002</span><span class="c l" style="left:462px">A002</span><span class="c" style="left:587px">慈溪市亚路车辆...</span><span class="c l" style="left:712px">2020-09-08</span><span class="c l" style="left:837px">2020-09-24</span><span class="c" style="left:962px">沈阳金杯锦恒汽...</span><span class="c" style="left:1087px">陈林</span><span class="c l" style="left:1212px">13555887411</span></div>
<div class="row" style="top:260px"><i class="cb" style="left:7px;top:5px"></i><span class="c" style="left:37px">已确认</span><span class="c" style="left:112px">日程订单</span><span class="c l" style="left:212px">K2009080012</span><span class="c l" style="left:337px">A002</span><span class="c l" style="left:462px">A002</span><span class="c" style="left:587px">慈溪市亚路车辆...</span><span class="c l" style="left:712px">2020-09-08</span><span class="c l" style="left:837px">2020-09-15</span><span class="c" style="left:962px">沈阳金杯锦恒汽...</span><span class="c" style="left:1087px">陈林</span><span class="c l" style="left:1212px">13555887411</span></div>
<div class="row alt" style="top:286px"><i class="cb" style="left:7px;top:5px"></i><span class="c" style="left:37px">发布</span><span class="c" style="left:112px">日程订单</span><span class="c l" style="left:212px">K2009080011</span><span class="c l" style="left:337px">A067</span><span class="c l" style="left:462px">A067</span><span class="c" style="left:587px">重庆瑞丰精密模...</span><span class="c l" style="left:712px">2020-09-08</span><span class="c l" style="left:837px">2020-09-15</span><span class="c" style="left:962px">沈阳金杯锦恒汽...</span><span class="c" style="left:1087px">刘兴娟</span><span class="c l" style="left:1212px">18704087073</span></div>
<div class="row" style="top:312px"><i class="cb" style="left:7px;top:5px"></i><span class="c" style="left:37px">已确认</span><span class="c" style="left:112px">日程订单</span><span class="c l" style="left:212px">K2009080010</span><span class="c l" style="left:337px">A021</span><span class="c l" style="left:462px">A021</span><span class="c" style="left:587px">营口阿部配线有...</span><span class="c l" style="left:712px">2020-09-08</span><span class="c l" style="left:837px">2020-09-15</span><span class="c" style="left:962px">沈阳金杯锦恒汽...</span><span class="c" style="left:1087px">刘兴娟</span><span class="c l" style="left:1212px">18704087073</span></div>
<div class="row alt" style="top:338px"><i class="cb" style="left:7px;top:5px"></i><span class="c" style="left:37px">已确认</span><span class="c" style="left:112px">日程订单</span><span class="c l" style="left:212px">K2009080009</span><span class="c l" style="left:337px">A061</span><span class="c l" style="left:462px">A061</span><span class="c" style="left:587px">沈阳东亿机械制...</span><span class="c l" style="left:712px">2020-09-08</span><span class="c l" style="left:837px">2020-09-15</span><span class="c" style="left:962px">沈阳金杯锦恒汽...</span><span class="c" style="left:1087px">刘兴娟</span><span class="c l" style="left:1212px">18704087073</span></div>
<div class="row" style="top:364px"><i class="cb" style="left:7px;top:5px"></i><span class="c" style="left:37px">发布</span><span class="c" style="left:112px">日程订单</span><span class="c l" style="left:212px">K2009080008</span><span class="c l" style="left:337px">A022</span><span class="c l" style="left:462px">A022</span><span class="c" style="left:587px">宁波九鑫汽车配...</span><span class="c l" style="left:712px">2020-09-08</span><span class="c l" style="left:837px">2020-09-15</span><span class="c" style="left:962px">沈阳金杯锦恒汽...</span><span class="c" style="left:1087px">刘兴娟</span><span class="c l" style="left:1212px">18704087073</span></div>
<div class="row alt" style="top:390px"><i class="cb" style="left:7px;top:5px"></i><span class="c" style="left:37px">已确认</span><span class="c" style="left:112px">日程订单</span><span class="c l" style="left:212px">K2009080007</span><span class="c l" style="left:337px">A027</span><span class="c l" style="left:462px">A027</span><span class="c" style="left:587px">江阴市达力标准...</span><span class="c l" style="left:712px">2020-09-08</span><span class="c l" style="left:837px">2020-09-15</span><span class="c" style="left:962px">沈阳金杯锦恒汽...</span><span class="c" style="left:1087px">刘兴娟</span><span class="c l" style="left:1212px">18704087073</span></div>
<div class="row" style="top:416px"><i class="cb" style="left:7px;top:5px"></i><span class="c" style="left:37px">发布</span><span class="c" style="left:112px">日程订单</span><span class="c l" style="left:212px">K2009080006</span><span class="c l" style="left:337px">A031</span><span class="c l" style="left:462px">A031</span><span class="c" style="left:587px">吉林省振坤溢利...</span><span class="c l" style="left:712px">2020-09-08</span><span class="c l" style="left:837px">2020-09-15</span><span class="c" style="left:962px">沈阳金杯锦恒汽...</span><span class="c" style="left:1087px">刘兴娟</span><span class="c l" style="left:1212px">18704087073</span></div>
<div class="row alt" style="top:442px"><i class="cb" style="left:7px;top:5px"></i><span class="c" style="left:37px">发布</span><span class="c" style="left:112px">日程订单</span><span class="c l" style="left:212px">K2009080005</span><span class="c l" style="left:337px">A056</span><span class="c l" style="left:462px">A056</span><span class="c" style="left:587px">宁波华力兴紧固...</span><span class="c l" style="left:712px">2020-09-08</span><span class="c l" style="left:837px">2020-09-15</span><span class="c" style="left:962px">沈阳金杯锦恒汽...</span><span class="c" style="left:1087px">刘兴娟</span><span class="c l" style="left:1212px">18704087073</span></div>
<div class="row" style="top:468px"><i class="cb" style="left:7px;top:5px"></i><span class="c" style="left:37px">发布</span><span class="c" style="left:112px">日程订单</span><span class="c l" style="left:212px">K2009080004</span><span class="c l" style="left:337px">A047</span><span class="c l" style="left:462px">A047</span><span class="c" style="left:587px">嘉兴东营达汽车...</span><span class="c l" style="left:712px">2020-09-08</span><span class="c l" style="left:837px">2020-09-15</span><span class="c" style="left:962px">沈阳金杯锦恒汽...</span><span class="c" style="left:1087px">刘兴娟</span><span class="c l" style="left:1212px">18704087073</span></div>
<div class="row alt" style="top:494px"><i class="cb" style="left:7px;top:5px"></i><span class="c" style="left:37px">已确认</span><span class="c" style="left:112px">日程订单</span><span class="c l" style="left:212px">K2009080003</span><span class="c l" style="left:337px">A029</span><span class="c l" style="left:462px">A029</span><span class="c" style="left:587px">南京华脉汽车部...</span><span class="c l" style="left:712px">2020-09-08</span><span class="c l" style="left:837px">2020-09-28</span><span class="c" style="left:962px">沈阳金杯锦恒汽...</span><span class="c" style="left:1087px">陈林</span><span class="c l" style="left:1212px">13555887411</span></div>
    </div>
    <div id="pager">
      <div class="pbtn" style="left:3px;width:27px"></div>
      <div class="pbtn" style="left:33px;width:26px"></div>
      <svg style="left:9px;top:9px" width="14" height="15" viewBox="0 0 14 15">
        <defs><linearGradient id="pg1" x1="0" y1="0" x2="1" y2="0"><stop offset="0" stop-color="#d6d8dc"/><stop offset="1" stop-color="#a9adb3"/></linearGradient></defs>
        <rect x="0.6" y="0.3" width="3" height="14.2" rx="0.8" fill="url(#pg1)" stroke="#b9bcc1" stroke-width="0.6"/>
        <path d="M5.2 6.8L12.3 0.3V13.6Z" fill="url(#pg1)"/>
      </svg>
      <svg style="left:40px;top:9px" width="10" height="15" viewBox="0 0 10 15"><path d="M0.8 6.8L8.6 0.3V13.6Z" fill="url(#pg1)"/></svg>
      <i class="tsep" style="left:63px;top:8px;height:18px"></i>
      <span class="pt" style="left:72px">第</span>
      <div class="pinp" style="left:96px;width:38px"><span style="position:absolute;left:5px;top:3px;font-size:15px;line-height:20px;color:#000">1</span></div>
      <span class="pt" style="left:141px">页，共 226 页</span>
      <i class="tsep" style="left:236px;top:8px;height:18px"></i>
      <svg style="left:251px;top:9px" width="9" height="15" viewBox="0 0 9 15">
        <defs><linearGradient id="pg2" x1="0" y1="0" x2="1" y2="1"><stop offset="0" stop-color="#9dbaf2"/><stop offset="1" stop-color="#1d55cc"/></linearGradient></defs>
        <path d="M0 0.2L8.2 6.9L0 13.8Z" fill="url(#pg2)"/></svg>
      <svg style="left:278px;top:9px" width="14" height="15" viewBox="0 0 14 15">
        <path d="M0.7 0.2L8 7L0.7 13.9Z" fill="url(#pg2)"/>
        <rect x="9.4" y="0.5" width="3.5" height="14" rx="0.8" fill="url(#pg2)" stroke="#3f6fd0" stroke-width="0.5"/></svg>
      <i class="tsep" style="left:301px;top:8px;height:18px"></i>
      <span class="pt" style="left:311px">每页记录数：</span>
      <div class="pinp" style="left:401px;top:5px;width:100px"><span style="position:absolute;left:4px;top:1px;font-size:15px;line-height:20px;color:#000">20</span>
        <div style="position:absolute;left:77px;top:0;width:21px;height:24px;border-left:1px solid #b4b9c8;background:linear-gradient(#f4f4f4,#e6e6e6 45%,#d3d3d3)"><svg style="left:4px;top:9px" width="13" height="8" viewBox="0 0 13 8"><path d="M0.6 1H4L6.4 3.6L8.8 1H12.2L6.4 7Z" fill="#2f5a9f"/></svg></div></div>
      <span class="pt" style="left:1487px">显示 1 - 20 条，共 4507 条</span>
    </div>
  </div>
</div>
</body></html>
